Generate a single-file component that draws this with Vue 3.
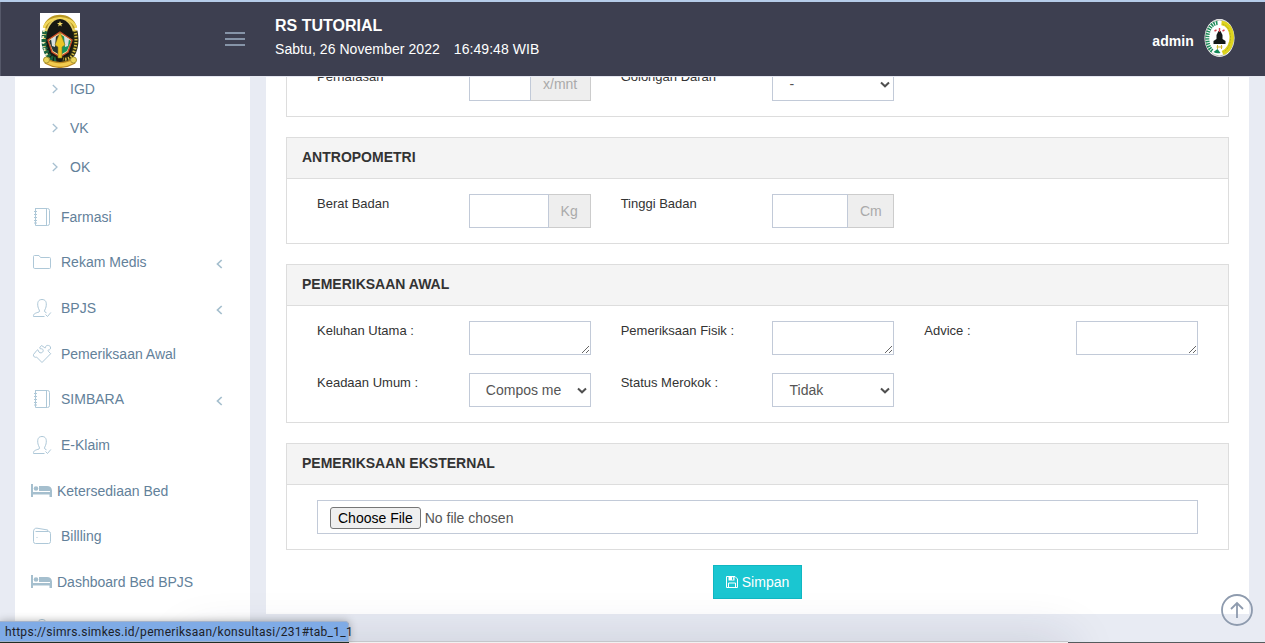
<script setup>
const subMenu = ['IGD', 'VK', 'OK']
const menu = [
  { label: 'Farmasi', icon: 'notebook' },
  { label: 'Rekam Medis', icon: 'folder', more: true },
  { label: 'BPJS', icon: 'user', more: true },
  { label: 'Pemeriksaan Awal', icon: 'puzzle' },
  { label: 'SIMBARA', icon: 'notebook', more: true },
  { label: 'E-Klaim', icon: 'user' },
  { label: 'Ketersediaan Bed', icon: 'bed' },
  { label: 'Billling', icon: 'wallet' },
  { label: 'Dashboard Bed BPJS', icon: 'bed' },
  { label: '', icon: 'user' }
]
const icons = {
  notebook: 'M3 1.5H15.500Q17.500 1.500 17.500 3.500V16.500Q17.500 18.500 15.500 18.500H3.500V1.500M14.500 1.500V18.500M2 4.500H5M2 7.500H5M2 10.500H5M2 13.500H5M2 16H5',
  folder: 'M1.500 15V4.500Q1.500 3.500 2.500 3.500H7L8.500 5.500H17.500Q18.500 5.500 18.500 6.500V15.500Q18.500 16.500 17.500 16.500H2.500Q1.500 16.500 1.500 15',
  user: 'M12.500 18.500H1.500C1 15.500 4 15 7 14C8.500 13 6.500 11.500 6 9C5 4 6.500 1.500 10 1.500S15 4 14 9C13.500 11.500 11.500 13 13 14L14.500 14.800M13.500 16.500L15.500 18.500L18.800 14.500',
  puzzle: 'M1.500 10.500L5 6.200Q6 5.200 6.400 6.500C6.500 9 9 9.500 10.500 8.200C12 6.500 11 4.500 8.800 4.800Q7 4.300 8 3.300L9.500 1.500L12 3.200C13.500 4.500 13.500 4 13.500 3C14 .8 17.500 1 18.400 2.800C19 4.500 18 6 16.500 6C15.500 6.500 16 7 17 8L18.700 9.700L10 18.500L4.500 13C3 14 1 12.500 1.500 10.500',
  wallet: 'M3.500 5.500H16.500Q18.500 5.500 18.500 7.500V15.500Q18.500 17.500 16.500 17.500H3.500Q1.500 17.500 1.500 15.500V6C1.500 3 3 2 5 2.200L15.800 4V5.500M4.500 11.500H5.500'
}
</script>

<template>
  <div class="page">
    <header>
      <div class="brand">
        <svg class="logo" viewBox="0 0 40 55">
          <path fill="#fff" d="M0 0H40V55H0z" />
          <ellipse cx="20" cy="27" rx="17" ry="24" fill="#e7d269" />
          <path d="M5 15C8 0 32 0 35 15" fill="none" stroke="#b89722" stroke-width="4" />
          <path d="M4 15C8 2 32 2 36 15" fill="none" stroke="#f1d75b" stroke-width="2.500" />
          <ellipse cx="20" cy="29" rx="14.500" ry="23" fill="#171913" />
          <path d="M20 19L32 27L28 39L20 44L12 39L8 27z" fill="#f8e6a0" stroke="#c84b25" stroke-width="1.400" />
          <path d="M20 21L31 28L27 38L20 42z" fill="#17945b" />
          <path d="M20 21L9 28L13 38L20 42z" fill="#253432" />
          <path d="M11 26L16 23L15 34L12 33zM29 26L24 23L25 34L28 33z" fill="#d8dfdf" />
          <path d="M20 19L25 32L22 34V45H18V34L15 32z" fill="#e9c624" stroke="#8b7220" stroke-width=".6" />
          <path d="M20 8l.8 2h2.200l-1.800 1.400.7 2.100-1.900-1.200-1.900 1.200.7-2.100L17 10h2.200z" fill="#f4dc67" />
          <path d="M5 18Q2 32 8 42Q12 47 16 46" fill="none" stroke="#19623e" stroke-width="5" stroke-dasharray="3 1" />
          <path d="M4 17Q1 32 8 44" fill="none" stroke="#e5e8bf" stroke-width="2" stroke-dasharray="2 4" />
          <path d="M35 18Q38 32 32 42Q28 47 23 46" fill="none" stroke="#292911" stroke-width="5" />
          <path d="M35 17Q38 32 32 43Q28 47 23 46" fill="none" stroke="#d8bf45" stroke-width="3" stroke-dasharray="1.500 1.500" />
          <path d="M6 48Q20 56 34 48" fill="none" stroke="#b88620" stroke-width="6" />
          <path d="M6 48Q20 56 34 48" fill="none" stroke="#f1ca4e" stroke-width="3.500" />
          <circle cx="6.500" cy="47" r="3" fill="#ead45b" stroke="#a89634" />
          <circle cx="33.500" cy="47" r="3" fill="#ead45b" stroke="#a89634" />
        </svg>
        <div class="burger"><i></i><i></i><i></i></div>
      </div>
      <div class="heading">
        <h1>RS TUTORIAL</h1>
        <p><span>Sabtu, 26 November 2022</span><span>16:49:48 WIB</span></p>
      </div>
      <div class="account">
        <b>admin</b>
        <svg class="avatar" viewBox="0 0 30 38">
          <ellipse cx="15" cy="19" rx="15" ry="19" fill="#fff" />
          <ellipse cx="15" cy="19" rx="14" ry="18" fill="none" stroke="#6b765f" stroke-width=".5" />
          <path d="M13 4C1 5 0 27 8 32" fill="none" stroke="#1c8b59" stroke-width="4" stroke-dasharray="1.500 1" />
          <path d="M17 4C30 5 31 29 18 34" fill="none" stroke="#dfd51d" stroke-width="4.500" />
          <path d="M18 5C28 7 29 28 19 33" fill="none" stroke="#a39e23" stroke-width=".7" stroke-dasharray="2 1" />
          <path d="M14 12h2l2 4v4l3 2v3H9v-3l3-2v-4z" fill="#151918" />
          <path d="M15 9v4M10 12l2-1M18 12l2-1" stroke="#d94952" stroke-width="1.400" />
          <path d="M12 28h6M13 26v4M17 26v4" stroke="#d2b930" />
          <path d="M9 33l4-3 3 4q-4 1-7-1" fill="#138a57" />
        </svg>
      </div>
    </header>

    <div class="main">
      <nav>
        <ul class="sub">
          <li v-for="s in subMenu" :key="s">
            <svg viewBox="0 0 6 10"><path d="M.8 1L5 5L.8 9" /></svg>{{ s }}
          </li>
        </ul>
        <ul class="menu">
          <li v-for="(m, i) in menu" :key="i" :class="{ beds: m.icon === 'bed' }">
            <svg v-if="m.icon === 'bed'" class="bed" viewBox="0 0 21 14">
              <path d="M0 0H2V8H19V3.500Q21 4 21 6.500V13H18.500V10.500H2V13H0zM8 2H16Q20.500 2 20.800 6V7H8z" />
              <circle cx="5" cy="4.500" r="2.300" />
            </svg>
            <svg v-else class="line" viewBox="0 0 20 20"><path :d="icons[m.icon]" /></svg>
            <span>{{ m.label }}</span>
            <svg v-if="m.more" class="more" viewBox="0 0 6 10"><path d="M5.200 1L1 5L5.200 9" /></svg>
          </li>
        </ul>
      </nav>

      <form @submit.prevent>
        <section class="cut">
          <div class="body">
            <label>Pernafasan</label>
            <div class="group"><input><span class="wide">x/mnt</span></div>
            <label>Golongan Darah</label>
            <div class="select"><select><option>-</option></select><svg viewBox="0 0 10 6"><path d="M1 1L5 4.800L9 1" /></svg></div>
          </div>
        </section>
        <section>
          <h2>ANTROPOMETRI</h2>
          <div class="body">
            <label>Berat Badan</label>
            <div class="group"><input><span class="kg">Kg</span></div>
            <label>Tinggi Badan</label>
            <div class="group"><input><span class="cm">Cm</span></div>
          </div>
        </section>
        <section>
          <h2>PEMERIKSAAN AWAL</h2>
          <div class="body">
            <label>Keluhan Utama :</label>
            <textarea></textarea>
            <label>Pemeriksaan Fisik :</label>
            <textarea></textarea>
            <label>Advice :</label>
            <textarea></textarea>
            <label>Keadaan Umum :</label>
            <div class="select"><select><option>Compos me</option></select><svg viewBox="0 0 10 6"><path d="M1 1L5 4.800L9 1" /></svg></div>
            <label>Status Merokok :</label>
            <div class="select"><select><option>Tidak</option></select><svg viewBox="0 0 10 6"><path d="M1 1L5 4.800L9 1" /></svg></div>
          </div>
        </section>
        <section>
          <h2>PEMERIKSAAN EKSTERNAL</h2>
          <div class="body file"><input type="file"></div>
        </section>
        <button class="save">
          <svg viewBox="0 0 12 12"><path d="M.5.5H9L11.500 3V11.500H.5zM2.500 11.500V7H9.500V11.500" /><path class="solid" d="M2.500.5H8.500V4.500H2.500zM6 1.300V3.700H7.200V1.300z" /></svg>
          Simpan
        </button>
      </form>
    </div>

    <div class="dock"></div>
    <div class="edge"></div>
    <svg class="top" viewBox="0 0 32 32"><circle cx="16" cy="16" r="15" /><path d="M16 24V9M10 15L16 9L22 15" /></svg>
    <div class="status">https://simrs.simkes.id/pemeriksaan/konsultasi/231#tab_1_1</div>
  </div>
</template>

<style>
body { margin: 0; overflow: hidden; }
</style>

<style scoped>
* { box-sizing: border-box; }
.page { position: relative; height: 643px; overflow: hidden; display: flex; flex-direction: column; background: #e8ebf3; font: 14px/20px "Liberation Sans", Arial, sans-serif; color: #333; }
header { flex: none; height: 77px; display: flex; background: #3d3f50; border-top: 2px solid #b5cce9; border-bottom: 1px solid #e5e7f1; box-shadow: inset 1px 0 #56596a; color: #fff; }
.brand { width: 275px; display: flex; justify-content: space-between; padding: 11px 30px 0 40px; }
.logo { width: 40px; height: 55px; }
.burger { width: 20px; display: flex; flex-direction: column; gap: 4px; padding-top: 19px; }
.burger i { height: 2px; background: #8694a8; }
.heading { padding-top: 14px; }
h1 { margin: 0; font-size: 16px; line-height: 20px; }
p { margin: 3px 0 0; display: flex; gap: 14px; font-size: 14px; letter-spacing: .06px; }
.account { margin: 0 30px 0 auto; display: flex; gap: 10px; padding-top: 17px; }
.account b { line-height: 44px; letter-spacing: .1px; }
.avatar { width: 31px; height: 38px; }
.main { display: flex; align-items: flex-start; gap: 16px; padding: 0 16px 0 15px; }
nav { width: 235px; height: 566px; overflow: hidden; background: #fff; flex: none; color: #63819a; }
ul { list-style: none; margin: 0; padding: 0; }
li { display: flex; align-items: center; }
svg { flex: none; fill: none; }
.sub { margin-top: -7.500px; padding: 0 0 7.500px 37px; }
.sub li { height: 39px; gap: 12px; }
.sub svg { width: 6px; height: 10px; stroke: #a8c0d1; stroke-width: 1.300; }
.menu { padding: 0 25px 0 17px; }
.menu li { height: 45.670px; gap: 9px; }
.menu .beds { gap: 5px; margin-left: -1px; }
.line { width: 20px; height: 20px; stroke: #aec8d8; stroke-width: 1; }
.bed { width: 21px; height: 14px; fill: #a5bfce; }
.more { width: 7px; height: 10px; margin: 3px 2px 0 auto; stroke: #a5bfce; stroke-width: 1.700; }
form { flex: 1; height: 537px; background: #fff; padding: 0 20px; display: flex; flex-direction: column; }
section { border: 1px solid #ddd; margin-bottom: 20px; flex: none; }
.cut { height: 40px; border-top: 0; overflow: hidden; }
.cut .body { margin-top: -25px; }
h2 { margin: 0; padding: 0 15px; height: 41px; line-height: 38px; font-size: 14px; background: #f4f4f4; border-bottom: 1px solid #ddd; }
.body { display: grid; grid-template-columns: repeat(6, 1fr); row-gap: 18px; padding: 15px; }
label { padding-left: 15px; font-size: 13px; height: 34px; line-height: 19px; }
.group, .select, textarea { margin: 0 15px; width: auto; height: 34px; min-width: 0; }
.group { display: flex; }
.group input { flex: 1; width: 0; border: 1px solid #c2cad8; padding: 0; background: #fff; }
.group span { border: 1px solid #ccc; border-left: 0; background: #eee; color: #aaa; line-height: 32px; text-align: center; }
.wide { width: 60px; }
.kg { width: 42px; }
.cm { width: 46px; }
textarea { display: block; width: calc(100% - 30px); border: 1px solid #c2cad8; background: #fff; }
.select { position: relative; }
select { appearance: none; width: 100%; height: 34px; border: 1px solid #c2cad8; border-radius: 0; background: #fff; color: #555; padding: 0 0 0 16px; font: 14px "Liberation Sans", Arial, sans-serif; }
.select svg { position: absolute; right: 4px; top: 14px; width: 10px; height: 7px; stroke: #505050; stroke-width: 2; }
.file { display: block; padding: 15px 30px; }
.file input { display: block; width: 100%; height: 34px; border: 1px solid #c2cad8; padding: 6px 12px; font: 14px/20px "Liberation Sans", Arial, sans-serif; color: #555; }
.file input::file-selector-button { font: inherit; height: 22px; margin: 0 4px 0 0; padding: 0 7px; border: 1px solid #767676; border-radius: 3px; background: #efefef; color: #000; }
.save { align-self: center; width: 89px; height: 34px; margin-top: -5px; display: flex; align-items: center; justify-content: center; gap: 4px; padding: 0; border: 1px solid #10b7c2; background: #1ac6d1; color: #fff; font: 14px "Liberation Sans", Arial, sans-serif; }
.save svg { width: 12px; height: 12px; stroke: #fff; }
.save .solid { fill: #fff; fill-rule: evenodd; stroke: none; }
.dock { position: absolute; left: 190px; width: 878px; top: 641px; height: 40px; background: #f1f1f2; border-top: 1px solid #c5c6ca; box-shadow: 0 0 50px rgba(30, 38, 75, .17); }
.edge { position: absolute; left: 1068px; right: 0; bottom: 0; height: 1px; background: #555b5d; }
.top { position: absolute; left: 1221px; top: 594px; width: 32px; height: 32px; stroke: #8e9bae; stroke-width: 1.800; }
.status { position: absolute; left: 0; top: 621px; width: 349px; height: 21px; padding-left: 5px; background: #7fabe6; border: 1px solid #a3b3cc; border-left: 0; border-radius: 0 4px 0 0; box-shadow: 0 0 8px rgba(0, 0, 0, .3), 0 1px #26352a; font: 12px/20px Roboto, sans-serif; letter-spacing: .3px; color: #1c2128; white-space: nowrap; }
</style>
